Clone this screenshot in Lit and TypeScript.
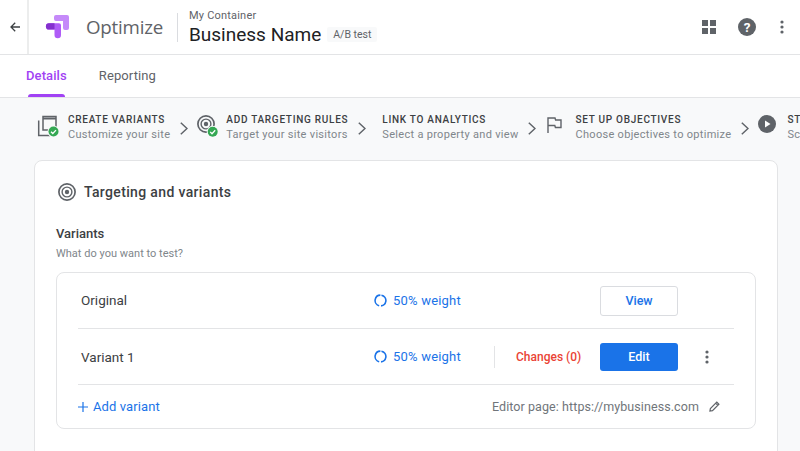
import { LitElement, html, css, svg } from "lit";
import { customElement } from "lit/decorators.js";

const check = (x: number, y: number) => svg`<g transform="translate(${x} ${y})"><circle r="6" fill="#f8f9fa"/><circle r="5" fill="#34a853"/><path d="M-2.500 .2l1.800 1.800 3.200-3.400" fill="none" stroke="#fff" stroke-width="1.300"/></g>`;
const target = (c: string) => svg`<circle cx="9" cy="9" r="8.100" fill="none" stroke="${c}" stroke-width="1.700"/><circle cx="9" cy="9" r="4.900" fill="none" stroke="${c}" stroke-width="1.400"/><circle cx="9" cy="9" r="2.200" fill="${c}"/>`;
const chevron = html`<span class="chev"><svg width="8" height="13" viewBox="0 0 8 13"><path d="M.8 .8L7 6.500 .8 12.200" fill="none" stroke="#5f6368" stroke-width="1.500"/></svg></span>`;
const weightIcon = html`<svg class="wicon" width="13" height="13" viewBox="0 0 13 13"><g transform="rotate(-80 6.500 6.500)"><circle cx="6.500" cy="6.500" r="5.400" fill="none" stroke="#1a73e8" stroke-width="1.600" stroke-dasharray="15 1.960"/></g></svg>`;

@customElement("app-root")
export class AppRoot extends LitElement {
  static styles = css`
    :host { display: block; width: 800px; height: 451px; overflow: hidden; background: #f8f9fa; font-family: Roboto, "Liberation Sans", sans-serif; color: #3c4043; }
    .top { height: 54px; background: #fff; border-bottom: 1px solid #e3e4e6; display: flex; align-items: center; }
    .back { width: 29px; height: 54px; border-right: 2px solid #eceded; box-sizing: border-box; display: flex; align-items: center; padding-left: 10px; flex: none; }
    .logo { margin-left: 16px; flex: none; display: block; }
    .brand { font-family: "Open Sans", Roboto, sans-serif; font-size: 18.700px; color: #5f6368; margin-left: 16px; width: 91px; flex: none; letter-spacing: -.2px; padding-bottom: 2px; }
    .vline { width: 1px; height: 29px; background: #dadce0; flex: none; }
    .cont { margin-left: 11px; flex: none; padding-top: 1px; }
    .cname { font-size: 11px; line-height: 13px; color: #5f6368; letter-spacing: .2px; }
    .biz { display: flex; align-items: center; margin-top: 1px; }
    .bname { font-size: 19px; line-height: 24px; color: #202124; }
    .chip { margin-left: 6px; height: 15px; padding: 0 6px; background: #f8f9fa; font-size: 10.500px; line-height: 15px; color: #5f6368; border-radius: 2px; }
    .actions { margin-left: auto; display: flex; align-items: center; flex: none; padding-right: 16px; }
    .a-grid { margin-right: 22px; }
    .a-help { margin-right: 24px; }
    .tabs { height: 42px; background: #fff; border-bottom: 1px solid #e3e4e6; display: flex; padding-left: 26px; gap: 32px; font-size: 13px; letter-spacing: .1px; }
    .tab { position: relative; line-height: 41px; color: #5f6368; }
    .tab.on { color: #a142f4; font-weight: 500; }
    .tab.on::after { content: ""; position: absolute; left: 2px; right: 2px; bottom: 0; height: 3px; background: #a142f4; border-radius: 3px 3px 0 0; }
    .steps { height: 62px; display: flex; align-items: center; padding: 0 0 4px 37px; white-space: nowrap; box-sizing: border-box; }
    .icon { width: 31px; height: 24px; flex: none; display: flex; align-items: flex-start; }
    .icon.n { width: 29px; }
    .icon.f { width: 30px; }
    .icon.none { width: 7px; height: 0; }
    .flag { margin: 2px 0 0 1px; }
    .chev { width: 27px; flex: none; display: flex; justify-content: center; padding-top: 2px; }
    .st { font-size: 10px; line-height: 14px; font-weight: 500; letter-spacing: .72px; color: #3c4043; text-transform: uppercase; }
    .sd { font-size: 11px; line-height: 15px; letter-spacing: .3px; color: #80868b; }
    .card { margin: 0 22px 0 34px; background: #fff; border: 1px solid #e3e4e6; border-radius: 8px; padding: 0 21px; height: 320px; box-sizing: border-box; }
    .chead { height: 62px; display: flex; align-items: center; gap: 7px; padding-left: 1px; font-size: 14px; font-weight: 500; color: #3c4043; letter-spacing: .35px; }
    .vt { margin-top: 2px; font-size: 13px; line-height: 18px; font-weight: 500; color: #3c4043; }
    .vd { margin-top: 3px; font-size: 11px; line-height: 15px; color: #80868b; letter-spacing: .02px; }
    .box { margin-top: 11px; width: 700px; height: 157px; border: 1px solid #e3e4e6; border-radius: 8px; box-sizing: border-box; padding: 0 21px; }
    .row { height: 56px; display: grid; grid-template-columns: 296px 120px 106px 78px 1fr; align-items: center; border-bottom: 1px solid #e3e4e6; box-sizing: border-box; font-size: 13px; }
    .name { padding-left: 3px; font-size: 13.500px; color: #3c4043; }
    .name.first { padding-bottom: 2px; }
    .w { display: flex; align-items: center; gap: 6px; color: #1a73e8; font-size: 13px; letter-spacing: .2px; }
    .wicon { display: block; }
    .ch { border-left: 1px solid #e3e4e6; height: 22px; line-height: 22px; padding-left: 21px; color: #ea4335; font-size: 12px; font-weight: 500; white-space: nowrap; }
    .btn { width: 78px; height: 28px; border-radius: 3px; font-size: 12.500px; font-weight: 500; text-align: center; line-height: 28px; box-sizing: border-box; }
    .btn.o { height: 30px; line-height: 28px; border: 1px solid #dadce0; color: #1a73e8; background: #fff; }
    .btn.p { background: #1a73e8; color: #fff; }
    .kebab { padding-left: 27px; display: flex; }
    .foot { height: 43px; display: flex; align-items: center; }
    .add { display: flex; align-items: center; gap: 5px; color: #1a73e8; font-size: 13px; letter-spacing: .1px; }
    .ed { margin-left: auto; padding-right: 14px; display: flex; align-items: center; gap: 10px; color: #70757a; font-size: 12.500px; letter-spacing: .08px; }
    svg { display: block; flex: none; }
  `;

  render() {
    return html`
      <div class="top">
        <div class="back"><svg width="10" height="10" viewBox="0 0 10 10"><path d="M10 5H1.500M5.200 .8L1 5l4.200 4.200" fill="none" stroke="#3c4043" stroke-width="1.300"/></svg></div>
        <svg class="logo" width="25" height="24" viewBox="0 0 25 24">
          <path d="M9 2a2 2 0 012-2h11a2 2 0 012 2v11a2 2 0 01-2 2h-2a2 2 0 01-2-2V6H11a2 2 0 01-2-2z" fill="#c58af9"/>
          <path d="M4 8.300H14a2 2 0 012 2V20a3.250 3.250 0 01-6.500 0V14.500H4a3.100 3.100 0 010-6.200z" fill="#af5cf7"/>
          <path d="M4 8.300h5.500v6.200H4a3.100 3.100 0 010-6.200z" fill="#8430ce"/>
        </svg>
        <div class="brand">Optimize</div>
        <div class="vline"></div>
        <div class="cont">
          <div class="cname">My Container</div>
          <div class="biz"><span class="bname">Business Name</span><span class="chip">A/B test</span></div>
        </div>
        <div class="actions">
          <svg class="a-grid" width="14" height="14" viewBox="0 0 14 14"><path fill="#5f6368" d="M0 0h6v6H0zM8 0h6v6H8zM0 8h6v6H0zM8 8h6v6H8z"/></svg>
          <svg class="a-help" width="18" height="18" viewBox="0 0 18 18"><circle cx="9" cy="9" r="9" fill="#5f6368"/><text x="9" y="14" text-anchor="middle" font-family="Roboto" font-weight="700" font-size="13.500" fill="#fff">?</text></svg>
          <svg width="4" height="14" viewBox="0 0 4 14"><g fill="#5f6368"><circle cx="2" cy="2" r="1.600"/><circle cx="2" cy="7" r="1.600"/><circle cx="2" cy="12" r="1.600"/></g></svg>
        </div>
      </div>
      <div class="tabs"><div class="tab on">Details</div><div class="tab">Reporting</div></div>
      <div class="steps">
        <div class="icon"><svg width="24" height="24" viewBox="0 0 24 24"><path d="M6 1.500h13V15H6z" fill="none" stroke="#5f6368" stroke-width="1.500"/><path d="M6 3.500h13" stroke="#5f6368" stroke-width="2"/><path d="M1.700 5.500v15H13" fill="none" stroke="#5f6368" stroke-width="1.500"/>${check(16.5, 16.5)}</svg></div>
        <div><div class="st">Create variants</div><div class="sd">Customize your site</div></div>
        ${chevron}
        <div class="icon n"><svg width="24" height="24" viewBox="0 0 24 24">${target("#5f6368")}${check(15.7, 16.7)}</svg></div>
        <div><div class="st">Add targeting rules</div><div class="sd">Target your site visitors</div></div>
        ${chevron}
        <div class="icon none"></div>
        <div><div class="st">Link to Analytics</div><div class="sd">Select a property and view</div></div>
        ${chevron}
        <div class="icon f"><svg class="flag" width="15" height="16" viewBox="0 0 15 16"><path d="M1 16V1h7l.6 2H14v7.500H8.400l-.6-2H1" fill="none" stroke="#5f6368" stroke-width="1.400"/></svg></div>
        <div><div class="st">Set up objectives</div><div class="sd">Choose objectives to optimize</div></div>
        ${chevron}
        <div class="icon n"><svg width="18" height="18" viewBox="0 0 18 18"><circle cx="9" cy="9" r="9" fill="#5f6368"/><path d="M7 5.500v7L12.500 9z" fill="#fff"/></svg></div>
        <div><div class="st">Start experiment</div><div class="sd">Schedule and start</div></div>
      </div>
      <div class="card">
        <div class="chead"><svg width="20" height="20" viewBox="-1 -1 20 20">${target("#5f6368")}</svg><span>Targeting and variants</span></div>
        <div class="vt">Variants</div>
        <div class="vd">What do you want to test?</div>
        <div class="box">
          <div class="row">
            <div class="name first">Original</div>
            <div class="w">${weightIcon}50% weight</div>
            <div></div>
            <div class="btn o">View</div>
          </div>
          <div class="row">
            <div class="name">Variant 1</div>
            <div class="w">${weightIcon}50% weight</div>
            <div class="ch">Changes (0)</div>
            <div class="btn p">Edit</div>
            <div class="kebab"><svg width="4" height="14" viewBox="0 0 4 14"><g fill="#5f6368"><circle cx="2" cy="2" r="1.600"/><circle cx="2" cy="7" r="1.600"/><circle cx="2" cy="12" r="1.600"/></g></svg></div>
          </div>
          <div class="foot">
            <div class="add"><svg width="10" height="10" viewBox="0 0 10 10"><path d="M5 0v10M0 5h10" stroke="#1a73e8" stroke-width="1.200"/></svg>Add variant</div>
            <div class="ed">Editor page: https://mybusiness.com<svg width="11" height="11" viewBox="0 0 12 12"><path d="M1 11l.5-2.800L8.500 1.200l2.300 2.300-7 7z M7.300 2.400l2.300 2.300" fill="none" stroke="#5f6368" stroke-width="1.300"/></svg></div>
          </div>
        </div>
      </div>
    `;
  }
}
